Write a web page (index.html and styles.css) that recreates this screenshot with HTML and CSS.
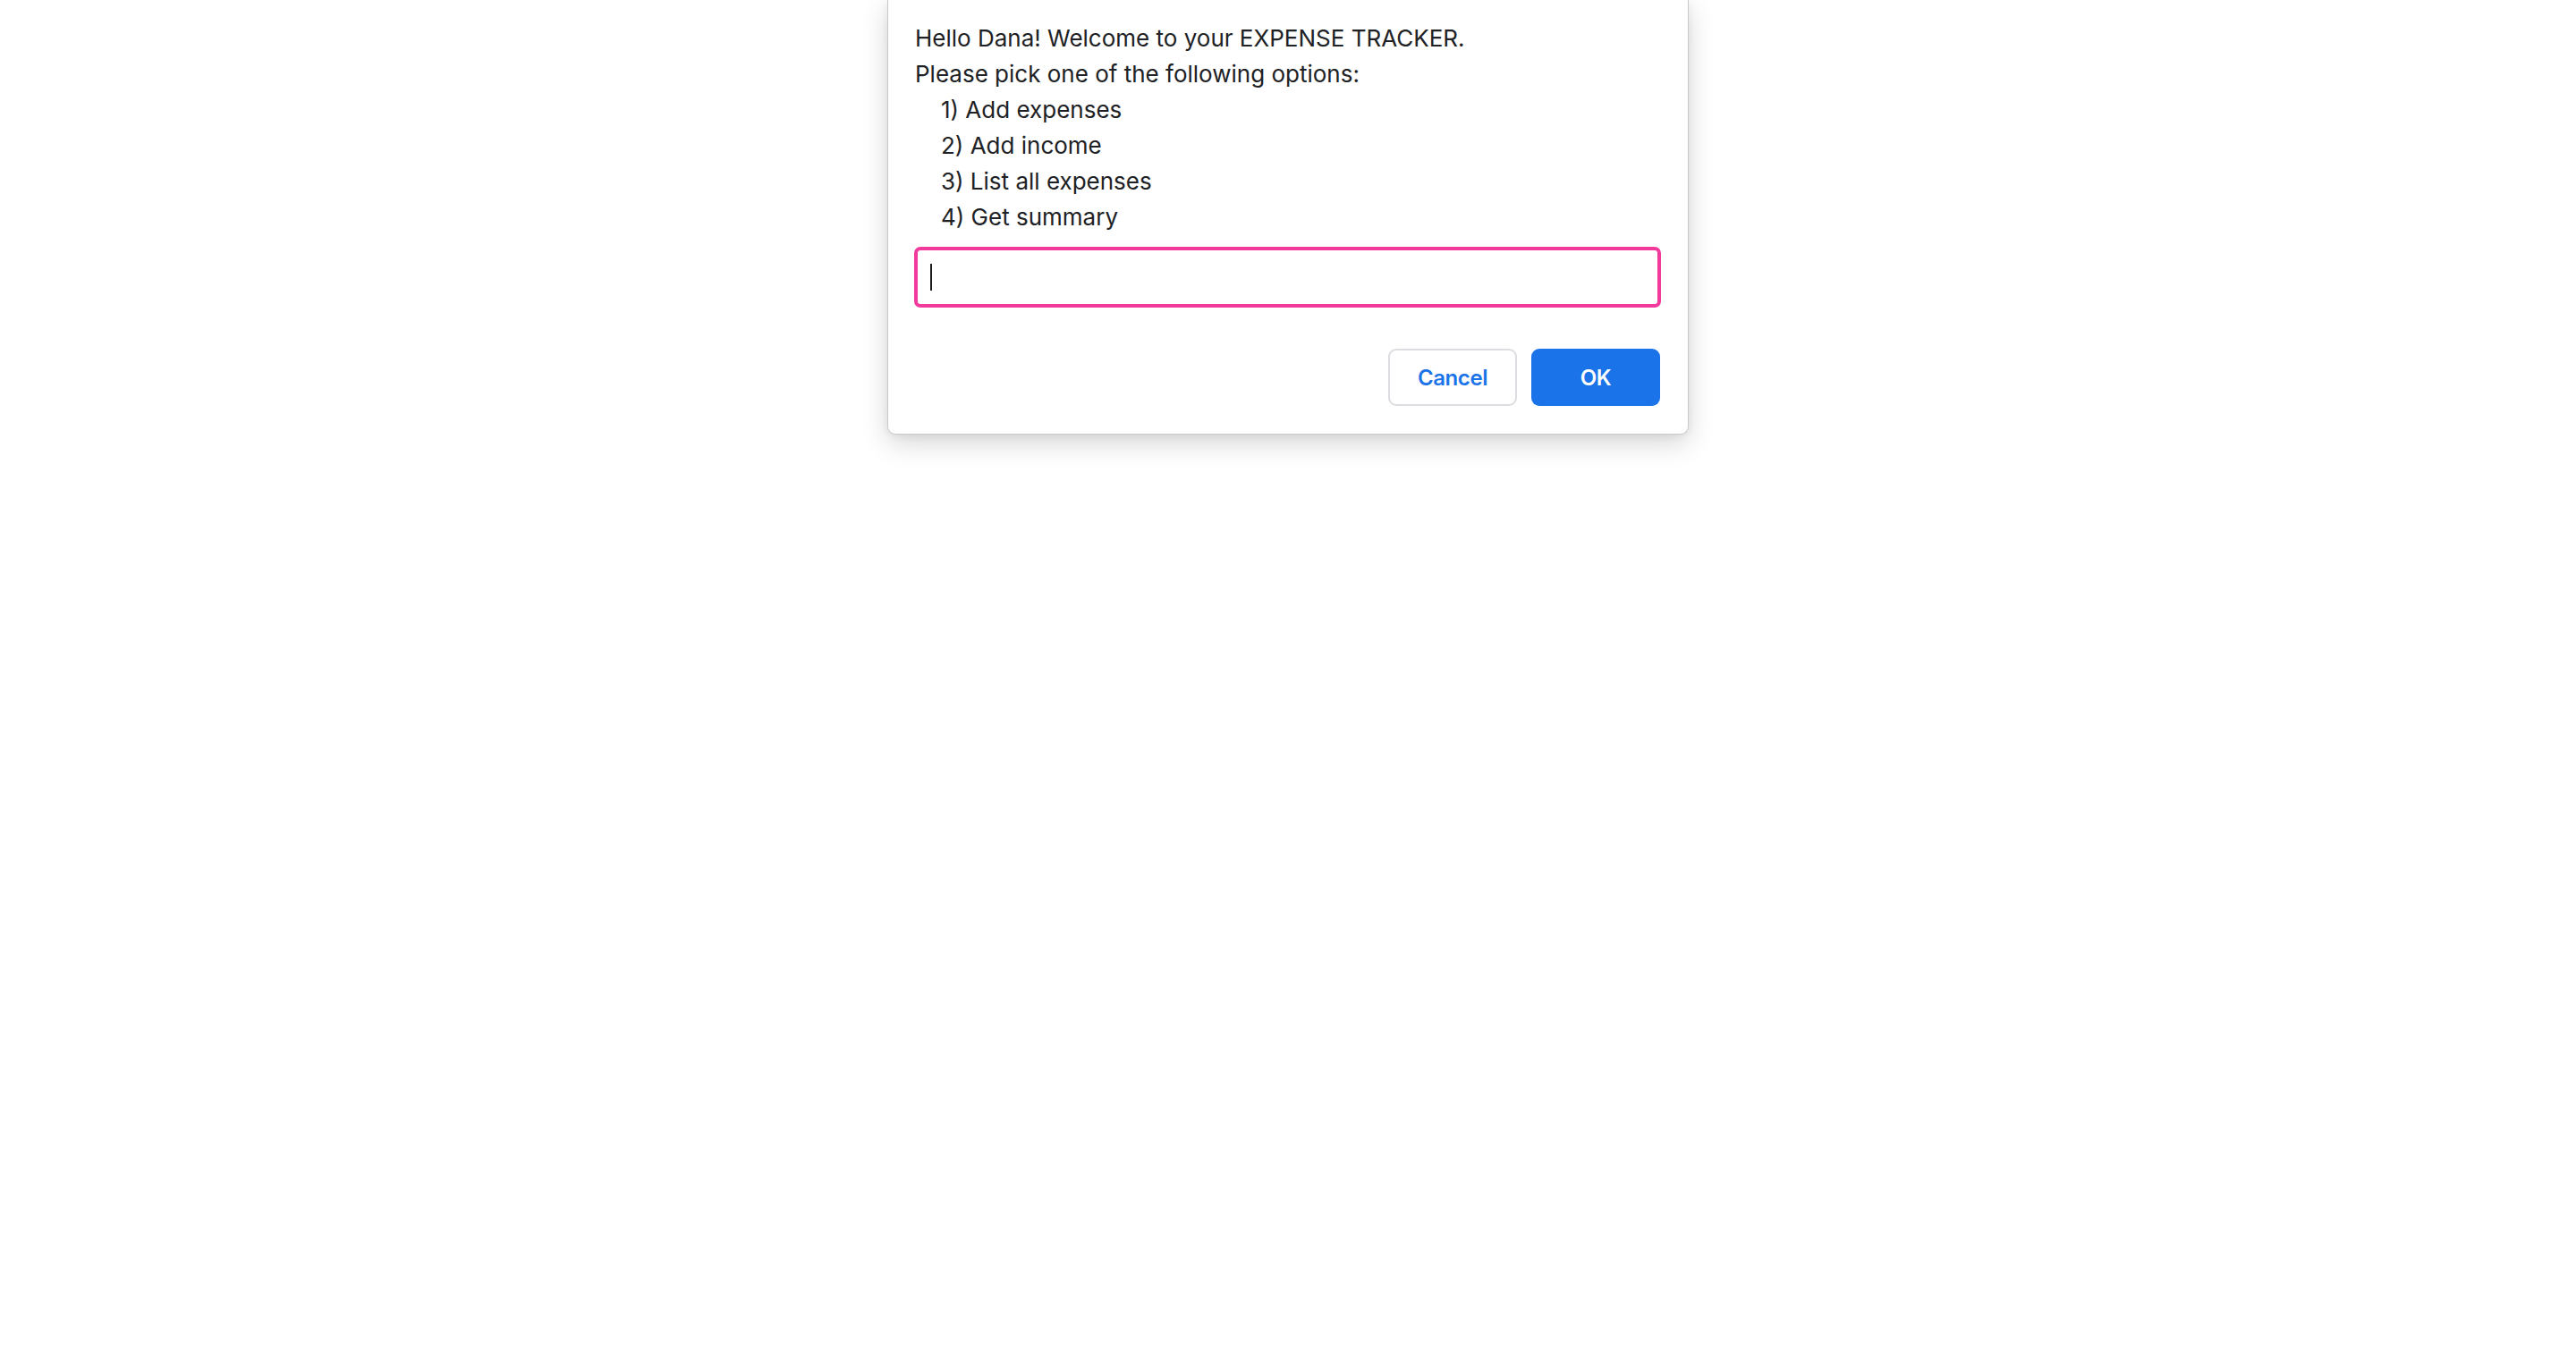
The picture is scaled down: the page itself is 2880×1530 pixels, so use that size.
FILE: index.html
```html
<!DOCTYPE html>
<html>
<head>
<meta charset="utf-8">
<link rel="stylesheet" href="styles.css">
</head>
<body>
<div class="dialog">
  <div class="message">
    <div class="line">Hello Dana! Welcome to your EXPENSE TRACKER.</div>
    <div class="line">Please pick one of the following options:</div>
    <div class="line option">1) Add expenses</div>
    <div class="line option">2) Add income</div>
    <div class="line option">3) List all expenses</div>
    <div class="line option">4) Get summary</div>
  </div>
  <div class="field"><span class="caret"></span></div>
  <div class="actions">
    <button class="btn btn-cancel">Cancel</button>
    <button class="btn btn-ok">OK</button>
  </div>
</div>
</body>
</html>
```

FILE: styles.css
```css
html, body {
  margin: 0;
  padding: 0;
  background: #ffffff;
}
body {
  display: flex;
  justify-content: center;
  align-items: flex-start;
  height: 1530px;
  font-family: Inter, "Noto Sans", "Liberation Sans", sans-serif;
}
.dialog {
  box-sizing: border-box;
  width: 896px;
  background: #ffffff;
  border: 1px solid #c9c9c9;
  border-top: none;
  border-radius: 0 0 9px 9px;
  padding: 23px 30px 31px 29px;
  box-shadow: 0 10px 30px rgba(0, 0, 0, 0.16), 0 2px 8px rgba(0, 0, 0, 0.06);
}
.message {
  color: #202124;
  font-size: 26px;
  line-height: 40px;
  padding-left: 1px;
}
.option {
  padding-left: 29px;
}
.field {
  box-sizing: border-box;
  margin-top: 13px;
  height: 68px;
  border: 4px solid #f13a9b;
  border-radius: 7px;
  display: flex;
  align-items: center;
  padding-left: 14px;
}
.caret {
  display: block;
  width: 2px;
  height: 30px;
  background: #1d1d1f;
}
.actions {
  margin-top: 46px;
  display: flex;
  justify-content: flex-end;
  gap: 16px;
  padding-right: 1px;
}
.btn {
  box-sizing: border-box;
  width: 144px;
  height: 64px;
  border-radius: 9px;
  font-family: Inter, "Noto Sans", "Liberation Sans", sans-serif;
  font-size: 24px;
  letter-spacing: -0.4px;
  font-weight: 600;
  cursor: pointer;
}
.btn-cancel {
  background: #ffffff;
  color: #1a73e8;
  border: 2px solid #dcdde0;
}
.btn-ok {
  background: #1a73e8;
  color: #ffffff;
  border: none;
}
```
